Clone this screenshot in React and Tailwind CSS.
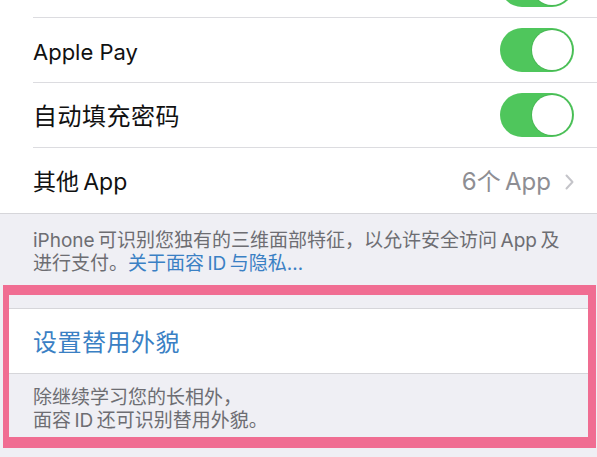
const Toggle = () => (
    <div className="flex h-[44px] w-[74px] shrink-0 items-center justify-end rounded-full bg-[#4fc65c] p-[2px]">
        <div className="h-[40px] w-[40px] rounded-full bg-white shadow-[0_0_0_1px_rgba(60,160,70,0.35)]" />
    </div>
);

const Row = ({ children, right, last, className = '' }) => (
    <div className={`flex h-[65px] pl-[33px] ${className}`}>
        <div className={`flex flex-1 items-center justify-between pr-[23px] ${last ? '' : 'border-b border-[#dcdce0]'}`}>
            <div className="pt-[4px]">{children}</div>
            {right}
        </div>
    </div>
);

const intro = 'iPhone\u2009可识别您独有的三维面部特征，以允许安全访问\u2009App\u2009及进行支付。';
const privacy = '关于面容\u2009ID\u2009与隐私…';
const altLine = '面容\u2009ID\u2009还可识别替用外貌。';

export default function App() {
    return (
        <div className="h-[457px] w-[597px] overflow-hidden bg-[#efeff4] font-['Inter','Noto_Sans_CJK_SC',sans-serif] text-[#111]">
            {/* settings group */}
            <div className="border-b border-[#d6d6da] bg-white">
                <Row className="mt-[-47px]" right={<Toggle />} />
                <Row right={<Toggle />}>
                    <span className="text-[22px]">Apple Pay</span>
                </Row>
                <Row right={<Toggle />}>
                    <span className="text-[24px] tracking-[0.5px]">自动填充密码</span>
                </Row>
                <Row
                    last
                    right={
                        <div className="flex items-center gap-[14px] pt-[3px] text-[#8e8e93]">
                            <span className="text-[24px]">{'6个\u2009App'}</span>
                            <svg width="9" height="16" viewBox="0 0 9 16" fill="none">
                                <path d="M1.5 1.5 L7.5 8 L1.5 14.5" stroke="#c4c4c9" strokeWidth="2" strokeLinecap="round" strokeLinejoin="round" />
                            </svg>
                        </div>
                    }
                >
                    <span className="text-[23px]">{'其他\u2009App'}</span>
                </Row>
            </div>

            <p className="h-[71px] px-[33px] pt-[15px] text-[19px] leading-[23px] text-[#6d6d72]">
                {intro}<span className="text-[#3a80c4]">{privacy}</span>
            </p>

            {/* highlighted section */}
            <div className="ml-[3px] mr-[1px] border-t-[10px] border-r-[8px] border-b-[11px] border-l-[6px] border-[#f06d92]">
                <div className="h-[14px] border-b border-[#d6d6da]" />
                <div className="flex h-[65px] items-center border-b border-[#d6d6da] bg-white pl-[24px] pt-[3px]">
                    <span className="text-[24px] tracking-[0.5px] text-[#3a80c4]">设置替用外貌</span>
                </div>
                <p className="h-[63px] px-[24px] pt-[12px] text-[19px] leading-[23px] text-[#6d6d72]">
                    除继续学习您的长相外，
                    <br />
                    {altLine}
                </p>
            </div>
        </div>
    );
}
